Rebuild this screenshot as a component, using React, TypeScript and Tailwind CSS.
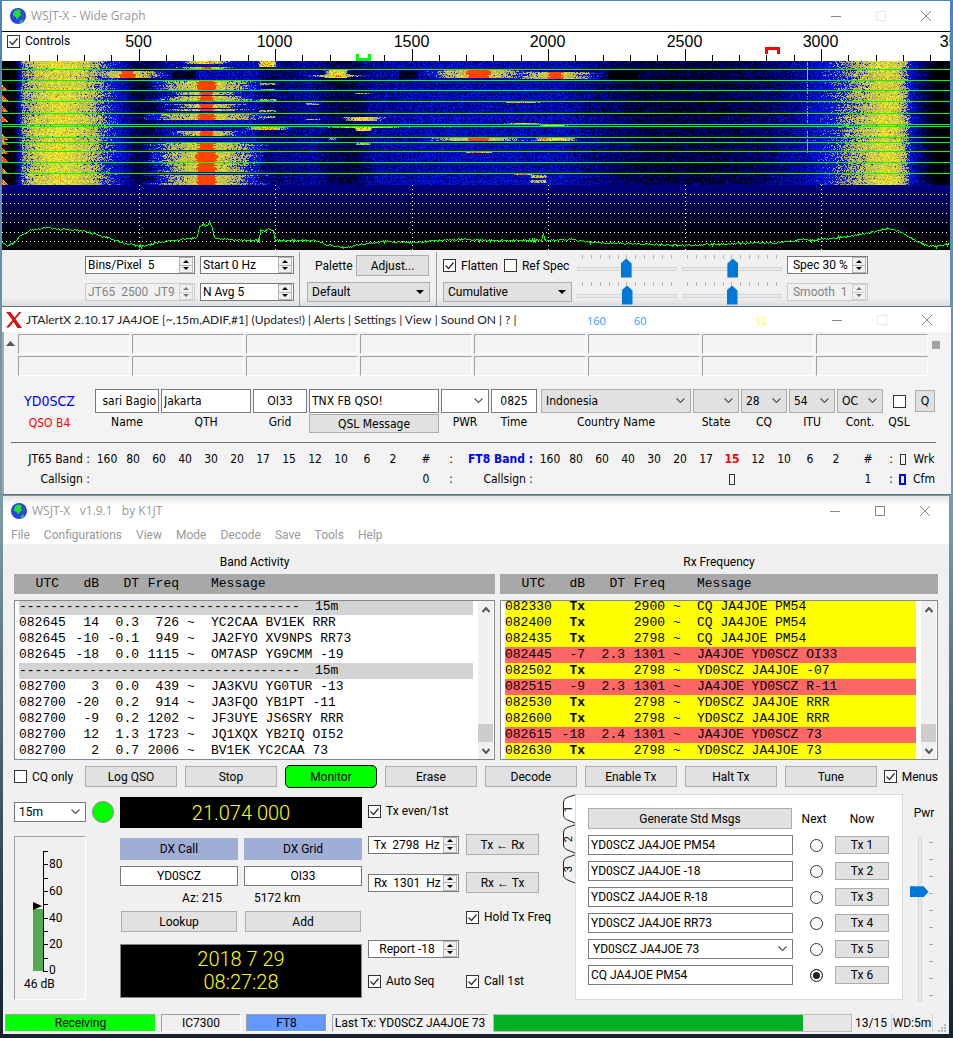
import { useMemo, useState } from "react";
import type { ReactNode } from "react";
import { clsx } from "clsx";

// ─── Waterfall model ─────────────────────────────────────────────────────────

const WF_W = 948;
const WF_H = 124;

const PALETTE = [
  "#000034",
  "#00006c",
  "#0008a4",
  "#0618e0",
  "#8c8c78",
  "#b4b450",
  "#d0d040",
  "#f0f024",
  "#ff8c00",
  "#ff4400",
];
const THRESHOLDS = [0.16, 0.23, 0.31, 0.4, 0.57, 0.61, 0.69, 0.79, 0.9, 0.95];

// Average level across the passband: [x, level]
const BASE: [number, number][] = [
  [0, 0.02], [11, 0.08], [15, 0.26], [20, 0.58], [34, 0.7], [58, 0.79],
  [76, 0.73], [90, 0.66], [101, 0.56], [113, 0.45], [124, 0.34], [133, 0.21],
  [150, 0.24], [165, 0.34], [200, 0.38], [250, 0.38], [262, 0.28], [285, 0.29],
  [310, 0.34], [330, 0.24], [350, 0.21], [372, 0.34], [440, 0.38], [560, 0.37],
  [590, 0.3], [640, 0.21], [700, 0.2], [760, 0.25], [798, 0.34], [825, 0.46],
  [844, 0.58], [864, 0.68], [883, 0.77], [895, 0.73], [904, 0.6], [910, 0.4],
  [925, 0.2], [936, 0.08], [948, 0.08],
];

// Stations heard: [centre, half core, halo, top, bottom, peak]
const BURSTS: [number, number, number, number, number, number][] = [
  [204, 6, 20, 0, 3, 0.88], [204, 5, 24, 6, 8, 0.97],
  [204, 9, 48, 20, 29, 1], [204, 7, 40, 31, 34, 1], [204, 7, 50, 35, 40, 1],
  [204, 7, 36, 43, 47, 1], [204, 7, 44, 48, 50, 1],
  [204, 8, 54, 53, 59, 1], [204, 7, 38, 70, 75, 1], [204, 8, 50, 81, 89, 1],
  [204, 10, 48, 91, 101, 1], [204, 9, 48, 102, 111, 1], [204, 9, 50, 114, 124, 1],
  [125, 7, 34, 10, 17, 1], [334, 6, 8, 9, 17, 0.8], [334, 3, 34, 14, 16, 0.93],
  [476, 11, 46, 9, 17, 1], [553, 7, 40, 11, 18, 1],
  [265, 6, 4, 0, 6, 0.88], [265, 7, 3, 22, 24, 0.62], [265, 7, 3, 28, 29, 0.62],
  [265, 7, 3, 38, 40, 0.64], [265, 7, 3, 49, 51, 0.62], [265, 7, 3, 55, 57, 0.62],
  [265, 7, 16, 66, 69, 0.92], [311, 6, 3, 42, 44, 0.62], [311, 6, 3, 58, 59, 0.62],
  [361, 6, 18, 56, 60, 0.8], [361, 7, 36, 66, 67, 0.9], [361, 6, 4, 67, 70, 0.84],
  [361, 6, 3, 82, 84, 0.66], [361, 6, 3, 32, 33, 0.62], [330, 3, 2, 77, 79, 0.62],
  [476, 11, 50, 76, 80, 1], [476, 7, 12, 29, 30, 0.8], [476, 8, 8, 90, 92, 0.96],
  [553, 10, 14, 77, 80, 0.84], [541, 4, 4, 77, 80, 0.94], [521, 5, 20, 41, 42, 0.96],
  [521, 8, 16, 62, 64, 0.82], [521, 5, 6, 101, 102, 0.9], [521, 5, 8, 113, 114, 0.95],
  [536, 7, 2, 114, 117, 0.66], [536, 7, 2, 119, 122, 0.66], [550, 8, 12, 64, 65, 0.82],
];

const PERIOD_LINES = [8, 19, 29, 40, 52, 63, 65, 76, 81, 90, 101, 112];
const EDGE_HITS = [27, 37, 48, 58, 76, 81, 90, 98, 110, 121];

function noise(x: number, y: number) {
  let h = Math.imul(x + 374, 668265263) ^ Math.imul(y + 51, 374761393);
  h = Math.imul(h ^ (h >>> 13), 1274126177);
  h = Math.imul(h ^ (h >>> 16), 2246822519);
  return ((h ^ (h >>> 15)) >>> 0) / 4294967296;
}

function interpolate(points: [number, number][], x: number) {
  for (let i = 1; i < points.length; i++) {
    const [x0, v0] = points[i - 1];
    const [x1, v1] = points[i];
    if (x <= x1) return v0 + ((v1 - v0) * (x - x0)) / (x1 - x0);
  }
  return points[points.length - 1][1];
}

function level(x: number, y: number) {
  const base = interpolate(BASE, x);
  const jitter = (noise(x, y) + noise(x + 2000, y) - 1) * 0.17;
  const row = (noise(7, y) - 0.5) * 0.08;
  let v = base + jitter + row;

  // strong stations pull the gain down beside them
  if (y > 9 && y < 18 && ((x > 170 && x < 194) || (x > 396 && x < 416) || (x > 605 && x < 636))) v -= 0.2;
  // steady carrier
  if (x === 805 && y < 92 && noise(x, y) > 0.3) v = 0.62;

  for (const [cx, core, halo, y0, y1, peak] of BURSTS) {
    if (y < y0 || y >= y1) continue;
    const d = Math.abs(x - cx);
    const edge = (noise(cx, y) - 0.5) * 3;
    if (d <= core + edge) {
      const hit = peak >= 1 ? 1 : peak + jitter;
      v = Math.max(v, hit);
    } else {
      const reach = halo * (0.65 + 0.45 * noise(y, cx));
      const t = (d - core) / reach;
      if (t < 1) v = Math.max(v, Math.min(peak, 0.73) - 0.2 * t + jitter * 0.9 - (t > 0.7 ? 0.06 : 0));
    }
  }
  for (const ey of EDGE_HITS) {
    if (y >= ey - 3 && y <= ey + 2 && x < y - ey + 4) v = noise(x, y) > 0.35 ? 1 : 0.7;
  }
  return v;
}

function buildWaterfall() {
  const paths: string[][] = PALETTE.map(() => []);
  for (let y = 0; y < WF_H; y++) {
    let start = 0;
    let current = -1;
    for (let x = 0; x <= WF_W; x++) {
      let idx = -1;
      if (x < WF_W) {
        const v = level(x, y);
        while (idx + 1 < THRESHOLDS.length && v >= THRESHOLDS[idx + 1]) idx++;
      } else {
        idx = -2;
      }
      if (idx !== current) {
        if (current >= 0) paths[current].push(`M${start} ${y}h${x - start}v1h${start - x}z`);
        start = x;
        current = idx;
      }
    }
  }
  return paths.map((p) => p.join(""));
}

// Smoothed spectrum under the waterfall: [x, y]
const TRACE: [number, number][] = [
  [0, 58], [6, 60], [12, 57], [18, 50], [28, 45], [43, 42], [58, 44], [80, 45],
  [93, 49], [108, 53], [123, 58], [138, 61], [153, 58], [168, 55], [190, 53],
  [195, 52], [197, 41], [201, 39], [204, 41], [207, 37], [210, 42], [212, 53],
  [225, 54], [257, 55], [258, 44], [262, 46], [267, 43], [271, 45], [273, 55],
  [290, 55], [313, 55], [323, 59], [343, 62], [363, 58], [383, 56], [413, 57],
  [438, 55], [463, 54], [483, 55], [539, 55], [541, 49], [543, 55], [568, 54],
  [588, 57], [618, 58], [678, 60], [738, 58], [778, 57], [804, 54], [808, 55],
  [838, 52], [868, 47], [885, 43], [895, 45], [905, 50], [915, 56], [923, 60],
  [935, 61], [948, 58],
];

function buildTrace() {
  let d = "";
  for (let x = 0; x < WF_W; x++) {
    const y = Math.round(interpolate(TRACE, x) + (noise(x, 900) - 0.5) * 1.8) + 0.5;
    d += `${x === 0 ? "M" : "L"}${x + 0.5} ${y}`;
  }
  return d;
}

// ─── Small icons ─────────────────────────────────────────────────────────────

function Globe() {
  return (
    <svg width="16" height="16" viewBox="0 0 16 16" className="shrink-0">
      <circle cx="8" cy="8" r="8" fill="#2c3cf4" />
      <path d="M3 5.500Q4 2 7.500 1.500L11 2.500 10 5l1 2-2 2-2 3-1-3-3-1z" fill="#1be02c" />
      <path d="M9 14.500l1.500-2 3-1.500-1 2.500-2 1.500z" fill="#1be02c" />
      <path d="M11 3l2.500 1L15 8l-2 2-3 1 1-3z" fill="#2f5ab0" />
      <path d="M1 8l3 1 2 4-1 1-3-3z" fill="#3048c8" />
    </svg>
  );
}

function WindowButtons({ dimMax }: { dimMax?: boolean }) {
  return (
    <div className="flex h-full items-center gap-[35px] pr-[19px]">
      <button aria-label="Minimize">
        <svg width="10" height="10"><path d="M0 5.500h10" stroke="#8a8a8a" /></svg>
      </button>
      <button aria-label="Maximize">
        <svg width="10" height="10">
          <rect x="0.500" y="0.500" width="9" height="9" fill="none" stroke={dimMax ? "#e8e8e8" : "#8a8a8a"} />
        </svg>
      </button>
      <button aria-label="Close">
        <svg width="10" height="10"><path d="M0 0l10 10M10 0L0 10" stroke="#8a8a8a" /></svg>
      </button>
    </div>
  );
}

function Chevron() {
  return (
    <svg width="9" height="6" viewBox="0 0 9 6" className="pointer-events-none mr-[5px] self-center justify-self-end [grid-area:1/1]">
      <path d="M0.500 0.500l4 4 4-4" fill="none" stroke="#555" strokeWidth="1.200" />
    </svg>
  );
}

// ─── Controls ────────────────────────────────────────────────────────────────

function Check({ label, checked, hideLabel }: { label: string; checked?: boolean; hideLabel?: boolean }) {
  const [on, setOn] = useState(!!checked);
  return (
    <label className="flex items-center gap-[5px] whitespace-nowrap">
      <span className="grid shrink-0">
        <input
          type="checkbox"
          checked={on}
          onChange={() => setOn(!on)}
          aria-label={hideLabel ? label : undefined}
          className="size-[13px] appearance-none border border-[#333] bg-white [grid-area:1/1]"
        />
        {on && (
          <svg width="13" height="13" className="pointer-events-none [grid-area:1/1]">
            <path d="M2.500 6.500l3 3 5-6" fill="none" stroke="#333" strokeWidth="1.300" />
          </svg>
        )}
      </span>
      {!hideLabel && label}
    </label>
  );
}

interface SpinProps {
  label: string;
  value: string;
  className: string;
  disabled?: boolean;
  center?: boolean;
}

function Spin({ label, value, className, disabled, center }: SpinProps) {
  return (
    <div
      className={clsx(
        "flex h-[18px] items-stretch border",
        disabled ? "border-[#ccc] bg-[#f0f0f0] text-[#838383]" : "border-[#7a7a7a] bg-white",
        className
      )}
    >
      <input
        aria-label={label}
        defaultValue={value}
        disabled={disabled}
        className={clsx("w-0 min-w-0 flex-1 pl-[2px] outline-none", center && "text-center")}
      />
      <div className={clsx("mr-px flex w-[14px] shrink-0 flex-col border border-[#b4b4b4] bg-[#f0f0f0]", disabled && "opacity-50")}>
        <button aria-label={`${label} up`} className="flex flex-1 items-center justify-center border-b border-[#b4b4b4]">
          <svg width="6" height="3"><path d="M0 3h6L3 0z" /></svg>
        </button>
        <button aria-label={`${label} down`} className="flex flex-1 items-center justify-center">
          <svg width="6" height="3"><path d="M0 0h6L3 3z" /></svg>
        </button>
      </div>
    </div>
  );
}

interface PickProps {
  label: string;
  value: string;
  className: string;
  solid?: boolean;
}

function Pick({ label, value, className, solid }: PickProps) {
  return (
    <div className={clsx("grid", className)}>
      <select aria-label={label} className="w-full appearance-none px-1 outline-none [grid-area:1/1]">
        <option>{value}</option>
      </select>
      {solid ? (
        <svg width="8" height="4" className="pointer-events-none mr-[5px] self-center justify-self-end [grid-area:1/1]">
          <path d="M0 0h8L4 4z" />
        </svg>
      ) : (
        <Chevron />
      )}
    </div>
  );
}

function PushButton({ children, className }: { children: ReactNode; className?: string }) {
  return (
    <button className={clsx("border border-[#adadad] bg-[#e1e1e1] leading-none whitespace-nowrap", className)}>
      {children}
    </button>
  );
}

function LevelSlider({ label, value }: { label: string; value: number }) {
  return (
    <div className="flex h-[27px] w-[100px] flex-col">
      <div className="flex h-1 justify-between px-[5px]">
        {Array.from({ length: 11 }, (_, i) => (
          <span key={i} className="w-px bg-[#b8b4a8]" />
        ))}
      </div>
      <input
        type="range"
        aria-label={label}
        defaultValue={value}
        className="h-[19px] w-full appearance-none bg-transparent [&::-webkit-slider-runnable-track]:h-[4px] [&::-webkit-slider-runnable-track]:border [&::-webkit-slider-runnable-track]:border-[#d6d6d6] [&::-webkit-slider-runnable-track]:bg-[#e7eaea] [&::-webkit-slider-thumb]:mt-[-9px] [&::-webkit-slider-thumb]:h-[19px] [&::-webkit-slider-thumb]:w-[11px] [&::-webkit-slider-thumb]:appearance-none [&::-webkit-slider-thumb]:bg-[#0078d7] [&::-webkit-slider-thumb]:[clip-path:polygon(50%_0,100%_26%,100%_100%,0_100%,0_26%)]"
      />
    </div>
  );
}

// ─── Wide graph window ───────────────────────────────────────────────────────

function hz(f: number) {
  return Math.round(f * 0.273) + 0.5;
}

function WideGraph() {
  const waterfall = useMemo(buildWaterfall, []);
  const trace = useMemo(buildTrace, []);

  return (
    <section className="mr-[3px] ml-[2px] bg-[#f0f0f0]">
      <header className="flex h-[30px] items-center bg-white pl-2 font-['Open_Sans',sans-serif] text-[#999]">
        <Globe />
        <h1 className="ml-[5px] flex-1">WSJT-X - Wide Graph</h1>
        <WindowButtons dimMax />
      </header>

      <div className="relative h-[30px] overflow-hidden border-t border-black bg-white">
        <svg className="h-[29px] w-full" viewBox="0 0 948 29" preserveAspectRatio="xMinYMin slice">
          {Array.from({ length: 34 }, (_, i) => (i + 1) * 100).map((f) => (
            <path key={f} d={`M${hz(f)} ${f % 500 ? 23 : 17}V29`} stroke="#000" />
          ))}
          {[500, 1000, 1500, 2000, 2500, 3000, 3500].map((f) => (
            <text key={f} x={hz(f) - 1} y="15" textAnchor="middle" fontSize="16" fontFamily="Liberation Sans">
              {f}
            </text>
          ))}
          <path d="M355.500 22v5.500h12V22" fill="none" stroke="#0f0" strokeWidth="3" />
          <path d="M764.500 22v-5.500h12V22" fill="none" stroke="#f00" strokeWidth="3" />
        </svg>
        <div className="absolute top-0 left-[5px] bg-white pr-1">
          <Check label="Controls" checked />
        </div>
      </div>

      <svg
        className="block h-[124px] w-full bg-black"
        viewBox={`0 0 ${WF_W} ${WF_H}`}
        preserveAspectRatio="none"
        shapeRendering="crispEdges"
      >
        {waterfall.map((d, i) => (
          <path key={PALETTE[i]} d={d} fill={PALETTE[i]} />
        ))}
        {PERIOD_LINES.map((y) => (
          <rect key={y} y={y} width={WF_W} height="1" fill="#0f0" />
        ))}
      </svg>

      <svg
        className="block h-[65px] w-full bg-linear-to-b from-[#000080] to-black"
        viewBox="0 0 948 65"
        preserveAspectRatio="none"
        shapeRendering="crispEdges"
      >
        {[9, 18, 28, 37, 47, 56].map((y) => (
          <path key={y} d={`M0 ${y + 0.5}H948`} stroke="#fff" strokeDasharray="1 3" />
        ))}
        {[500, 1000, 1500, 2000, 2500, 3000].map((f) => (
          <path key={f} d={`M${hz(f)} 0V65`} stroke="#fff" strokeDasharray="1 3" />
        ))}
        <path d={trace} fill="none" stroke="#0f0" />
      </svg>

      <div className="flex h-[56px] bg-linear-to-b from-[#f0f0f0] from-85% to-[#dcdcdc] pl-[83px]">
        <div className="mt-[6px] grid content-start gap-x-[5px] gap-y-[9px]">
          <div className="flex gap-[5px]">
            <Spin label="Bins per pixel" value="Bins/Pixel  5" className="w-[110px]" />
            <Spin label="Start frequency" value="Start 0 Hz" className="w-[94px]" />
          </div>
          <div className="flex gap-[5px]">
            <Spin label="JT65 JT9 split" value="JT65  2500  JT9" className="w-[110px]" disabled />
            <Spin label="Averages" value="N Avg 5" className="w-[94px]" />
          </div>
        </div>
        <div className="mt-[2px] ml-[5px] flex flex-col gap-[6px] border-l border-[#a0a0a0] pt-[3px] pl-[7px]">
          <div className="flex items-center pl-2">
            <span className="w-[41px]">Palette</span>
            <PushButton className="h-[21px] w-[73px]">Adjust...</PushButton>
          </div>
          <Pick solid label="Palette" value="Default" className="h-5 w-[123px] border border-[#adadad] bg-[#e1e1e1]" />
        </div>
        <div className="mt-[2px] ml-[6px] flex flex-col gap-[6px] border-l border-[#a0a0a0] pt-[3px] pl-[6px]">
          <div className="flex h-[21px] items-center gap-[6px]">
            <Check label="Flatten" checked />
            <Check label="Ref Spec" />
          </div>
          <Pick solid label="Spectrum mode" value="Cumulative" className="h-5 w-[129px] border border-[#adadad] bg-[#e1e1e1]" />
        </div>
        <div className="mt-[5px] ml-[5px] grid grid-cols-2 content-start gap-x-[5px]">
          <LevelSlider label="Waterfall gain" value={49} />
          <LevelSlider label="Waterfall zero" value={51} />
          <LevelSlider label="Spectrum gain" value={50} />
          <LevelSlider label="Spectrum zero" value={50} />
        </div>
        <div className="mt-[6px] ml-[5px] flex flex-col gap-[9px]">
          <Spin label="Spectrum share" value=" Spec 30 %" className="w-[81px]" />
          <Spin label="Smoothing" value=" Smooth  1" className="w-[81px]" disabled />
        </div>
      </div>
    </section>
  );
}

// ─── Alert window ────────────────────────────────────────────────────────────

const BANDS = ["160", "80", "60", "40", "30", "20", "17", "15", "12", "10", "6", "2"];

function Field({ label, className, children }: { label: string; className: string; children: ReactNode }) {
  return (
    <div className={clsx("flex flex-col items-center", className)}>
      {children}
      <span className="pt-px leading-4 whitespace-nowrap">{label}</span>
    </div>
  );
}

function AlertWindow() {
  const box = "h-6 w-full border border-[#7a7a7a] bg-white px-[2px] outline-none";
  const combo = "h-6 w-full border border-[#adadad] bg-[#e1e1e1]";

  return (
    <section className="mr-[2px] ml-[2px] border-t border-b border-[#5f7380] bg-[#f3f3f3] text-[12px]">
      <header className="flex h-[25px] items-center bg-white pl-1 font-['Lato',sans-serif] text-[#222]">
        <svg width="16" height="16" viewBox="0 0 16 16" className="shrink-0">
          <path d="M0 0h4.500L8.500 5.500 13 0h2.500L9.500 7 16 16h-4.500L7.500 10 3 15.500H0L6.500 8z" fill="#d01414" />
        </svg>
        <h1 className="ml-1 whitespace-pre">JTAlertX 2.10.17 JA4JOE [~,15m,ADIF,#1] (Updates!)</h1>
        <nav className="flex whitespace-pre">
          {["Alerts", "Settings", "View", "Sound ON", "?"].map((item) => (
            <button key={item}>{` | ${item}`}</button>
          ))}
          <span>{" |"}</span>
        </nav>
        <div className="ml-auto flex pt-1 font-['Open_Sans',sans-serif] text-[11px]">
          <span className="w-[47px] text-[#3399ff]">160</span>
          <span className="w-[121px] text-[#3399ff]">60</span>
          <span className="w-[77px] text-[#ffff33]">12</span>
        </div>
        <WindowButtons dimMax />
      </header>

      <div className="border-l-2 border-[#a8a8a8] pb-[5px] font-['DejaVu_Sans_Condensed','Noto_Sans',sans-serif]">
        <div className="flex pt-[2px] pr-[11px] pl-[2px]">
          <svg width="9" height="5" className="mt-[7px] mr-[3px] shrink-0"><path d="M0 5h9L4.500 0z" fill="#555" /></svg>
          <div className="grid flex-1 grid-cols-8 gap-[2px]">
            {Array.from({ length: 16 }, (_, i) => (
              <div key={i} className="h-5 border border-t-[#a0a0a0] border-r-white border-b-white border-l-[#a0a0a0]" />
            ))}
          </div>
          <span className="mt-[7px] ml-1 size-2 bg-[#a0a0a0]" />
        </div>

        <div className="flex items-start gap-[2px] pt-[13px] pl-[3px]">
          <div className="w-[86px] pr-px text-center">
            <p className="text-[14px] leading-6 text-[#0000ff]">YD0SCZ</p>
            <p className="leading-5 text-[#ff0000]">QSO B4</p>
          </div>
          <Field label="Name" className="w-[64px]">
            <input aria-label="Name" defaultValue="sari Bagio" className={clsx(box, "text-right")} />
          </Field>
          <Field label="QTH" className="w-[90px]">
            <input aria-label="QTH" defaultValue="Jakarta" className={box} />
          </Field>
          <Field label="Grid" className="w-[54px]">
            <input aria-label="Grid" defaultValue="OI33" className={clsx(box, "text-center")} />
          </Field>
          <div className="w-[130px]">
            <input aria-label="Message" defaultValue="TNX FB QSO!" className={box} />
            <PushButton className="mt-px h-[19px] w-full">QSL Message</PushButton>
          </div>
          <Field label="PWR" className="w-[48px]">
            <Pick label="PWR" value="" className="h-6 w-full border border-[#7a7a7a] bg-white" />
          </Field>
          <Field label="Time" className="w-[46px]">
            <input aria-label="Time" defaultValue="0825" className={clsx(box, "text-center")} />
          </Field>
          <Field label="Country Name" className="ml-[2px] min-w-0 flex-1">
            <Pick label="Country Name" value="Indonesia" className={combo} />
          </Field>
          <Field label="State" className="w-[46px]">
            <Pick label="State" value="" className={combo} />
          </Field>
          <Field label="CQ" className="w-[46px]">
            <Pick label="CQ" value="28" className={combo} />
          </Field>
          <Field label="ITU" className="w-[46px]">
            <Pick label="ITU" value="54" className={combo} />
          </Field>
          <Field label="Cont." className="w-[46px]">
            <Pick label="Cont." value="OC" className={combo} />
          </Field>
          <Field label="QSL" className="w-[28px]">
            <span className="flex h-6 items-center">
              <Check label="QSL" hideLabel />
            </span>
          </Field>
          <PushButton className="mt-px mr-4 h-[22px] w-5">Q</PushButton>
        </div>

        <hr className="mt-[9px] mr-[15px] ml-[7px] border-[#707070]" />

        <table className="mt-[6px] ml-4 table-fixed text-center">
          <colgroup>
            <col className="w-[74px]" />
            {BANDS.map((b) => <col key={b} className="w-[26px]" />)}
            <col className="w-[40px]" />
            <col className="w-[10px]" />
            <col className="w-[81px]" />
            {BANDS.map((b) => <col key={b} className="w-[26px]" />)}
            <col className="w-[38px]" />
            <col className="w-[8px]" />
            <col className="w-[15px]" />
            <col className="w-[28px]" />
          </colgroup>
          <tbody className="leading-5 whitespace-nowrap">
            <tr>
              <th className="pr-1 text-right font-normal">JT65 Band :</th>
              {BANDS.map((b) => <td key={b}>{b}</td>)}
              <td>#</td>
              <td>:</td>
              <th className="pr-1 text-right font-bold text-[#0000ff]">FT8 Band :</th>
              {BANDS.map((b) => (
                <td key={b} className={clsx(b === "15" && "font-bold text-[#ff0000]")}>{b}</td>
              ))}
              <td>#</td>
              <td>:</td>
              <td><span className="inline-block h-[11px] w-[6px] border border-[#333] align-middle" /></td>
              <td>Wrk</td>
            </tr>
            <tr>
              <th className="pr-1 text-right font-normal">Callsign :</th>
              <td colSpan={12} />
              <td>0</td>
              <td>:</td>
              <th className="pr-1 text-right font-normal">Callsign :</th>
              <td colSpan={7} />
              <td><span className="inline-block h-[11px] w-[6px] border border-[#333] align-middle" /></td>
              <td colSpan={4} />
              <td>1</td>
              <td>:</td>
              <td><span className="inline-block h-[11px] w-[7px] border-2 border-[#0000ff] align-middle" /></td>
              <td>Cfm</td>
            </tr>
          </tbody>
        </table>
      </div>
    </section>
  );
}

// ─── Main window ─────────────────────────────────────────────────────────────

interface Decode {
  utc: string;
  db: string;
  dt: string;
  freq: string;
  msg: string;
}

const DASHES = "-".repeat(36);

const parse = (rows: string[]): Decode[] =>
  rows.map((r) => {
    const [utc, db, dt, freq, msg] = r.split("|");
    return { utc, db, dt, freq, msg };
  });

const BAND_ACTIVITY = parse([
  "-||||15m",
  "082645|14|0.3|726|YC2CAA BV1EK RRR",
  "082645|-10|-0.1|949|JA2FYO XV9NPS RR73",
  "082645|-18|0.0|1115|OM7ASP YG9CMM -19",
  "-||||15m",
  "082700|3|0.0|439|JA3KVU YG0TUR -13",
  "082700|-20|0.2|914|JA3FQO YB1PT -11",
  "082700|-9|0.2|1202|JF3UYE JS6SRY RRR",
  "082700|12|1.3|1723|JQ1XQX YB2IQ OI52",
  "082700|2|0.7|2006|BV1EK YC2CAA 73",
]);

const RX_FREQUENCY = parse([
  "082330|Tx||2900|CQ JA4JOE PM54",
  "082400|Tx||2900|CQ JA4JOE PM54",
  "082435|Tx||2798|CQ JA4JOE PM54",
  "082445|-7|2.3|1301|JA4JOE YD0SCZ OI33",
  "082502|Tx||2798|YD0SCZ JA4JOE -07",
  "082515|-9|2.3|1301|JA4JOE YD0SCZ R-11",
  "082530|Tx||2798|YD0SCZ JA4JOE RRR",
  "082600|Tx||2798|YD0SCZ JA4JOE RRR",
  "082615|-18|2.4|1301|JA4JOE YD0SCZ 73",
  "082630|Tx||2798|YD0SCZ JA4JOE 73",
]);

function DecodeList({ title, rows, rx, className }: { title: string; rows: Decode[]; rx?: boolean; className: string }) {
  return (
    <div className={clsx("min-w-0", className)}>
      <h2 className="text-center leading-4">{title}</h2>
      <div className="mt-1 flex h-5 items-center bg-[#a8a8a8] pl-[5px] font-['Liberation_Mono',monospace] text-[13px]">
        <span className="w-[40px] text-right">UTC</span>
        <span className="w-[40px] text-right">dB</span>
        <span className="w-[40px] text-right">DT</span>
        <span className="w-[40px] text-right">Freq</span>
        <span className="ml-8">Message</span>
      </div>
      <div className="mt-[6px] flex h-[160px] border border-[#828790] bg-white">
        <div className="flex flex-1 flex-col justify-end overflow-hidden pr-[5px] pl-1">
          <table className="w-full table-fixed font-['Liberation_Mono',monospace] text-[13px] leading-4 whitespace-pre">
            <colgroup>
              <col className="w-[48px]" />
              <col className="w-[32px]" />
              <col className="w-[40px]" />
              <col className="w-[40px]" />
              <col className="w-[32px]" />
              <col />
            </colgroup>
            <tbody>
              {rows.map((r, i) =>
                r.utc === "-" ? (
                  <tr key={i} className="h-4 bg-[#d3d3d3]">
                    <td colSpan={6}>
                      <span className="inline-block w-[296px]">{DASHES}</span>15m
                    </td>
                  </tr>
                ) : (
                  <tr
                    key={i}
                    className={clsx("h-4 text-right", rx && (r.db === "Tx" ? "bg-[#ffff00]" : "bg-[#ff6666]"))}
                  >
                    <td className="text-left">{r.utc}</td>
                    <td className={clsx(r.db === "Tx" && "font-bold")}>{r.db}</td>
                    <td>{r.dt}</td>
                    <td>{r.freq}</td>
                    <td className="pl-2 text-left">~</td>
                    <td className="text-left">{r.msg}</td>
                  </tr>
                )
              )}
            </tbody>
          </table>
        </div>
        <div className="mr-px flex w-[15px] flex-col items-center bg-[#f0f0f0]">
          <button aria-label="Scroll up" className="flex h-[17px] items-center">
            <svg width="8" height="6"><path d="M0.500 5l3.500-4 3.500 4" fill="none" stroke="#555" strokeWidth="2" /></svg>
          </button>
          <span className="mt-auto h-[18px] w-full bg-[#cdcdcd]" />
          <button aria-label="Scroll down" className="flex h-[17px] items-center">
            <svg width="8" height="6"><path d="M0.500 1l3.500 4 3.500-4" fill="none" stroke="#555" strokeWidth="2" /></svg>
          </button>
        </div>
      </div>
    </div>
  );
}

function Meter() {
  return (
    <div className="mt-[13px] h-[164px] w-[72px] border border-t-[#a0a0a0] border-r-white border-b-white border-l-[#a0a0a0]">
      <svg width="70" height="162" fontFamily="Roboto" fontSize="12">
        <rect x="18" y="72" width="10" height="62" fill="#54a954" />
        <path d="M18 65l9 4-9 4z" />
        <path d="M28.500 14V134" stroke="#000" />
        {[134, 121, 107, 94, 81, 67, 54, 41, 27, 14].map((y) => (
          <path key={y} d={`M28 ${y + 0.5}h5`} stroke="#000" />
        ))}
        {[80, 60, 40, 20, 0].map((n, i) => (
          <text key={n} x="34" y={[31, 58, 85, 111, 137][i]}>{n}</text>
        ))}
        <text x="9" y="151">46 dB</text>
      </svg>
    </div>
  );
}

const TX_MESSAGES = [
  "YD0SCZ JA4JOE PM54",
  "YD0SCZ JA4JOE -18",
  "YD0SCZ JA4JOE R-18",
  "YD0SCZ JA4JOE RR73",
  "YD0SCZ JA4JOE 73",
  "CQ JA4JOE PM54",
];

function TxPanel() {
  const [next, setNext] = useState(5);

  return (
    <div className="flex min-w-0 flex-1 pl-[22px]">
      <div className="flex flex-col">
        {[1, 2, 3].map((n) => (
          <button key={n} className="grid h-[30px] w-[14px] place-items-center">
            <svg width="14" height="30" className="[grid-area:1/1]">
              <path d="M14 0.500L5 3.500Q1.500 5 1.500 8v13q0 3 3 4.500L14 29.500" fill={n === 1 ? "#fff" : "#f0f0f0"} stroke="#222" />
            </svg>
            <span className="rotate-180 text-[11px] [grid-area:1/1] [writing-mode:vertical-rl]">{n}</span>
          </button>
        ))}
      </div>
      <div className="h-[206px] min-w-0 flex-1 border border-[#dadada] bg-white pt-[13px] pr-[13px] pl-3">
        <div className="flex items-center text-center">
          <PushButton className="mr-px h-[21px] flex-1">Generate Std Msgs</PushButton>
          <span className="w-[42px]">Next</span>
          <span className="w-[54px]">Now</span>
        </div>
        <div className="mt-[6px] flex flex-col gap-[6px]">
          {TX_MESSAGES.map((m, i) => (
            <div key={i} className="flex h-5 items-center">
              {i === 4 ? (
                <Pick label="Tx 5 message" value={m} className="h-5 flex-1 border border-[#7a7a7a] bg-white" />
              ) : (
                <input
                  aria-label={`Tx ${i + 1} message`}
                  defaultValue={m}
                  className="h-5 min-w-0 flex-1 border border-[#7a7a7a] bg-white pl-[2px] outline-none"
                />
              )}
              <span className="flex w-[42px] justify-center pl-1">
                <input
                  type="radio"
                  name="next"
                  aria-label={`Next Tx ${i + 1}`}
                  checked={next === i}
                  onChange={() => setNext(i)}
                  className="size-[13px] appearance-none rounded-full border border-[#333] bg-white checked:bg-[#222] checked:inset-ring-2 checked:inset-ring-white"
                />
              </span>
              <PushButton className="h-[18px] w-[54px]">{`Tx ${i + 1}`}</PushButton>
            </div>
          ))}
        </div>
      </div>
    </div>
  );
}

function PowerSlider() {
  return (
    <div className="ml-1 w-[34px] pt-[11px]">
      <label htmlFor="pwr" className="block text-center leading-4">Pwr</label>
      <div className="mt-4 flex pl-[3px]">
        <input
          id="pwr"
          type="range"
          defaultValue={68}
          className="h-[164px] w-[19px] appearance-none bg-transparent [direction:rtl] [writing-mode:vertical-lr] [&::-webkit-slider-runnable-track]:w-[4px] [&::-webkit-slider-runnable-track]:border [&::-webkit-slider-runnable-track]:border-[#d6d6d6] [&::-webkit-slider-runnable-track]:bg-[#e7eaea] [&::-webkit-slider-thumb]:ml-[-9px] [&::-webkit-slider-thumb]:h-[11px] [&::-webkit-slider-thumb]:w-[19px] [&::-webkit-slider-thumb]:appearance-none [&::-webkit-slider-thumb]:bg-[#0078d7] [&::-webkit-slider-thumb]:[clip-path:polygon(0_0,74%_0,100%_50%,74%_100%,0_100%)]"
        />
        <div className="flex flex-col justify-between py-[5px]">
          {Array.from({ length: 10 }, (_, i) => (
            <span key={i} className="h-px w-1 bg-[#b0ac9c]" />
          ))}
        </div>
      </div>
    </div>
  );
}

function MainWindow() {
  const sunken = "flex h-[18px] items-center justify-center border border-t-[#a0a0a0] border-r-white border-b-white border-l-[#a0a0a0]";

  return (
    <section className="mt-px mr-1 ml-[3px] bg-[#f0f0f0]">
      <div className="h-12 bg-linear-to-b from-[#e4e4e4] to-white to-20% text-[#999]">
        <header className="flex h-[30px] items-center pl-2 font-['Open_Sans',sans-serif]">
          <Globe />
          <h1 className="ml-[5px] flex-1 whitespace-pre">WSJT-X   v1.9.1   by K1JT</h1>
          <WindowButtons />
        </header>
        <nav className="flex gap-[14px] pl-2 leading-[18px]">
          {["File", "Configurations", "View", "Mode", "Decode", "Save", "Tools", "Help"].map((m) => (
            <button key={m}>{m}</button>
          ))}
        </nav>
      </div>

      <div className="px-[11px] pt-[10px]">
        <div className="flex gap-[5px]">
          <DecodeList title="Band Activity" rows={BAND_ACTIVITY} className="flex-[481]" />
          <DecodeList title="Rx Frequency" rows={RX_FREQUENCY} rx className="flex-[438]" />
        </div>

        <div className="mt-[5px] flex items-center">
          <div className="w-[71px] shrink-0"><Check label="CQ only" /></div>
          <div className="flex flex-1 items-center gap-2">
            {["Log QSO", "Stop", "Monitor", "Erase", "Decode", "Enable Tx", "Halt Tx", "Tune"].map((b) =>
              b === "Monitor" ? (
                <button key={b} className="h-[23px] flex-1 rounded-[5px] border border-black bg-[#00ff00] leading-none">{b}</button>
              ) : (
                <PushButton key={b} className="h-[21px] flex-1">{b}</PushButton>
              )
            )}
          </div>
          <div className="ml-[7px]"><Check label="Menus" checked /></div>
        </div>

        <div className="-mr-[3px] mt-[6px] flex">
          <div className="w-[106px] shrink-0 pt-[7px]">
            <div className="flex items-center gap-[6px]">
              <Pick label="Band" value="15m" className="h-5 w-[72px] border border-[#7a7a7a] bg-white" />
              <span className="size-[22px] rounded-full border border-[#8c8c8c] bg-[#00ff00]" />
            </div>
            <Meter />
          </div>

          <div className="w-[242px] shrink-0 pt-[3px]">
            <div className="flex h-[31px] items-center justify-center bg-black text-[20px] font-light text-[#ffff00]">
              21.074 000
            </div>
            <div className="mt-[10px] grid grid-cols-2 gap-x-[6px] gap-y-[6px] text-center">
              <label htmlFor="dxcall" className="h-[22px] bg-[#a0aed6] leading-[22px]">DX Call</label>
              <label htmlFor="dxgrid" className="h-[22px] bg-[#a0aed6] leading-[22px]">DX Grid</label>
              <input id="dxcall" defaultValue="YD0SCZ" className="h-5 w-full border border-[#7a7a7a] bg-white text-center" />
              <input id="dxgrid" defaultValue="OI33" className="h-5 w-full border border-[#7a7a7a] bg-white text-center" />
              <span className="pr-4 text-right leading-[13px]">Az: 215</span>
              <span className="pl-[10px] text-left leading-[13px]">5172 km</span>
              <PushButton className="mx-px h-[21px]">Lookup</PushButton>
              <PushButton className="mx-px h-[21px]">Add</PushButton>
            </div>
            <div className="mt-3 flex h-[54px] flex-col items-center justify-center border border-[#828790] bg-black text-[20px] leading-[23px] font-light text-[#ffff00]">
              <span>2018 7 29</span>
              <span>08:27:28</span>
            </div>
          </div>

          <div className="ml-[6px] grid shrink-0 grid-cols-[91px_73px] content-start items-center gap-x-[7px] pt-2">
            <div className="col-span-2 mb-[14px]"><Check label="Tx even/1st" checked /></div>
            <Spin label="Tx frequency" value=" Tx  2798  Hz" className="mb-[17px]" />
            <PushButton className="mb-[17px] h-[21px]">Tx ← Rx</PushButton>
            <Spin label="Rx frequency" value=" Rx  1301  Hz" className="mb-[15px]" />
            <PushButton className="mb-[15px] h-[21px]">Rx ← Tx</PushButton>
            <div className="col-start-2 mb-[14px]"><Check label="Hold Tx Freq" checked /></div>
            <Spin label="Report" value="Report -18" center className="col-span-1" />
            <div className="col-start-1 mt-[14px]"><Check label="Auto Seq" checked /></div>
            <div className="mt-[14px]"><Check label="Call 1st" checked /></div>
          </div>

          <TxPanel />
          <PowerSlider />
        </div>
      </div>

      <footer className="mt-[11px] flex h-[22px] items-center gap-[5px] pl-[2px]">
        <div className={clsx(sunken, "w-[151px] bg-[#00ff00]")}>Receiving</div>
        <div className={clsx(sunken, "w-[80px]")}>IC7300</div>
        <div className={clsx(sunken, "w-[81px] bg-[#6699ff]")}>FT8</div>
        <div className={clsx(sunken, "w-[156px] whitespace-nowrap")}>Last Tx: YD0SCZ JA4JOE 73</div>
        <div className="h-[18px] flex-1 border border-[#bcbcbc] bg-[#e6e6e6]">
          <div className="h-full bg-[#06b025]" style={{ width: `${(13 / 15) * 100}%` }} />
        </div>
        <span className="-ml-[2px] w-[32px]">13/15</span>
        <span className="-ml-px w-[42px] border-x border-[#d0d0d0] text-center whitespace-nowrap">WD:5m</span>
        <svg width="10" height="10" className="mr-px self-end" fill="#b8b8b8">
          <path d="M6 0h2v2h-2zM6 3h2v2h-2zM3 3h2v2h-2zM6 6h2v2h-2zM3 6h2v2h-2zM0 6h2v2h-2z" />
        </svg>
      </footer>
    </section>
  );
}

export default function App() {
  return (
    <main className="min-h-screen bg-linear-to-b from-[#4a84b8] via-[#7d9aa6] to-[#16222e] pt-px pb-1 font-['Roboto',sans-serif] text-[12px] text-black">
      <WideGraph />
      <AlertWindow />
      <MainWindow />
    </main>
  );
}
